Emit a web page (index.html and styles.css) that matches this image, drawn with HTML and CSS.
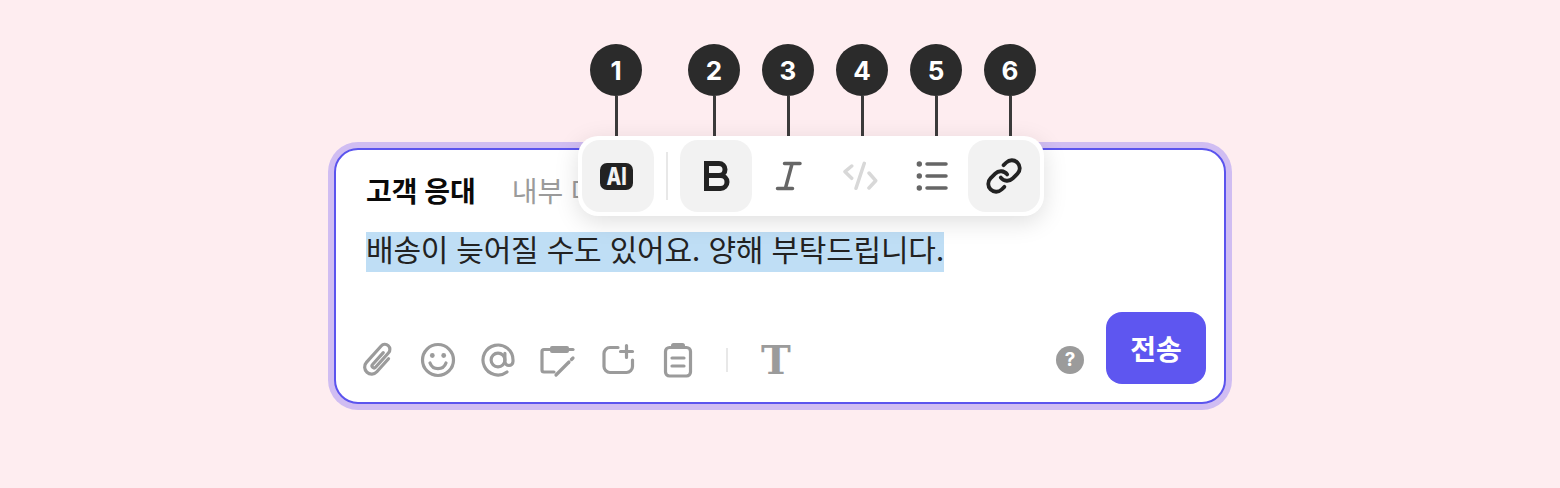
FILE: index.html
```html
<!DOCTYPE html>
<html lang="ko">
<head>
    <meta charset="UTF-8">
    <title>Composer toolbar</title>
    <link rel="stylesheet" href="styles.css">
</head>
<body>
    <div class="composer">
        <div class="tabs">
            <span class="tab active">고객 응대</span>
            <span class="tab">내부 대화</span>
        </div>
        <div class="message"><span class="selected">배송이 늦어질 수도 있어요. 양해 부탁드립니다.</span></div>
        <div class="footer">
            <div class="tools">
                <svg class="tool" viewBox="0 0 36 36"><g transform="rotate(42 18 18)"><path d="M25 10V27.500a7 7 0 0 1-14 0V5.500a5 5 0 0 1 10 0V25a2 2 0 0 1-4 0V9"/></g></svg>
                <svg class="tool" viewBox="0 0 36 36"><circle cx="18" cy="18" r="15.500"/><circle class="solid" cx="12.300" cy="13.500" r="2.400"/><circle class="solid" cx="23.700" cy="13.500" r="2.400"/><path d="M10 21a8.500 8.500 0 0 0 16 0"/></svg>
                <svg class="tool" viewBox="0 0 24 24"><g class="thin"><circle cx="12" cy="12" r="4.600"/><path d="M16.600 7.500v5.500a2.700 2.700 0 0 0 5.400 0v-1a10 10 0 1 0-4 8"/></g></svg>
                <svg class="tool" viewBox="0 0 36 36"><path d="M10 7.500H4a2 2 0 0 0-2 2V28a2 2 0 0 0 2 2h10"/><rect class="solid" x="10" y="4" width="19" height="7" rx="2"/><path d="M29 7.500h4"/><path d="M16 33l13-13"/><path d="M31.500 17.500l1.500-1.500"/></svg>
                <svg class="tool" viewBox="0 0 36 36"><path d="M18 5.500H10a6 6 0 0 0-6 6v13a6 6 0 0 0 6 6h16.500a6 6 0 0 0 6-6V18"/><path d="M26.500 3.500v12M20.500 9.500h12"/></svg>
                <svg class="tool" viewBox="0 0 36 36"><rect x="5.500" y="5.500" width="25" height="28.500" rx="4"/><rect class="solid" x="11" y="1" width="14" height="6" rx="2.500"/><path d="M12 16h12M12 24h12"/></svg>
                <span class="tool-divider"></span>
                <span class="text-tool">T</span>
            </div>
            <div class="actions">
                <span class="help">?</span>
                <button class="send">전송</button>
            </div>
        </div>

        <div class="toolbar">
            <div class="callouts">
                <div class="callout first"><span class="dot">1</span><span class="stem"></span></div>
                <div class="callout"><span class="dot">2</span><span class="stem"></span></div>
                <div class="callout"><span class="dot">3</span><span class="stem"></span></div>
                <div class="callout"><span class="dot">4</span><span class="stem"></span></div>
                <div class="callout"><span class="dot">5</span><span class="stem"></span></div>
                <div class="callout"><span class="dot">6</span><span class="stem"></span></div>
            </div>
            <div class="tb-btn on"><span class="ai-badge"><span class="ai-label">AI</span></span></div>
            <span class="tb-divider"></span>
            <div class="tb-btn on">
                <svg class="tb-icon dark bold" viewBox="0 0 36 36"><path d="M8.500 5.500H21a6 6 0 0 1 0 12H8.500M8.500 30.500V5.500M8.500 17.500H22.500a6.500 6.500 0 0 1 0 13H8.500Z"/></svg>
            </div>
            <div class="tb-btn">
                <svg class="tb-icon mid" viewBox="0 0 36 36"><path d="M14.500 5.500H30M7.500 30.500H22.500M22 6L15.500 30"/></svg>
            </div>
            <div class="tb-btn">
                <svg class="tb-icon faint" viewBox="0 0 36 36"><path d="M9.700 8L3 13.700L9.700 20.300M27 15L33.700 22.700L27 30M22.300 5.300L14 30.300"/></svg>
            </div>
            <div class="tb-btn">
                <svg class="tb-icon mid" viewBox="0 0 36 36"><circle class="solid" cx="5.300" cy="6" r="2.700"/><circle class="solid" cx="5.300" cy="18" r="2.700"/><circle class="solid" cx="5.300" cy="30" r="2.700"/><path d="M13 6H32M13 18H32M13 30H32"/></svg>
            </div>
            <div class="tb-btn on">
                <svg class="tb-icon dark link" viewBox="0 0 24 24"><path d="M10 13a5 5 0 0 0 7.540.54l3-3a5 5 0 0 0-7.070-7.070l-1.720 1.710"/><path d="M14 11a5 5 0 0 0-7.540-.54l-3 3a5 5 0 0 0 7.070 7.070l1.710-1.710"/></svg>
            </div>
        </div>
    </div>
</body>
</html>
```

FILE: styles.css
```css
* {
    box-sizing: border-box;
}
body {
    margin: 0;
    height: 488px;
    overflow: hidden;
    display: flex;
    justify-content: center;
    padding-top: 148px;
    background-color: #feedf0;
    font-family: Inter, "Noto Sans CJK KR", sans-serif;
}
.composer {
    position: relative;
    width: 892px;
    height: 256px;
    display: flex;
    flex-direction: column;
    background-color: #fff;
    border: 2px solid #5b54ee;
    border-radius: 24px;
    box-shadow: 0 0 0 6px #d0bdf2;
}
.tabs {
    display: flex;
    gap: 36px;
    padding: 24px 30px 0;
    font-size: 28px;
    line-height: 36px;
}
.tab {
    color: #9b9b9b;
}
.tab.active {
    color: #0a0a0a;
    font-weight: 700;
}
.message {
    padding: 22px 30px 0;
    font-size: 30px;
    letter-spacing: -0.22px;
    color: #222;
}
.selected {
    display: inline-block;
    line-height: 36px;
    padding-bottom: 4px;
    background-color: #bfdef5;
}
.footer {
    margin-top: auto;
    display: flex;
    justify-content: space-between;
    align-items: flex-end;
    padding: 0 18px 18px 24px;
}
.tools {
    display: flex;
    align-items: center;
    gap: 24px;
    margin-bottom: 6px;
}
.tool {
    width: 36px;
    height: 36px;
    fill: none;
    stroke: #9b9b9b;
    stroke-width: 3.2;
    stroke-linecap: round;
    stroke-linejoin: round;
}
.tool .thin {
    stroke-width: 2.1;
}
.solid {
    fill: currentColor;
    stroke: none;
}
.tool .solid {
    fill: #9b9b9b;
}
.tool-divider {
    width: 2px;
    height: 24px;
    background-color: #e8e8e8;
    margin-left: 6px;
}
.text-tool {
    width: 36px;
    margin-left: 6px;
    text-align: center;
    font-family: "DejaVu Serif", serif;
    font-weight: 700;
    font-size: 40px;
    line-height: 36px;
    color: #9b9b9b;
}
.actions {
    display: flex;
    align-items: flex-end;
    gap: 22px;
}
.help {
    width: 28px;
    height: 28px;
    margin-bottom: 10px;
    border-radius: 50%;
    background-color: #9b9b9b;
    color: #fff;
    font-size: 19px;
    font-weight: 700;
    line-height: 28px;
    text-align: center;
}
.send {
    width: 100px;
    height: 72px;
    border: none;
    border-radius: 16px;
    background-color: #5e56f0;
    color: #fff;
    font-family: inherit;
    font-size: 28px;
    font-weight: 700;
}
.toolbar {
    position: absolute;
    left: 242px;
    top: -14px;
    width: 466px;
    height: 80px;
    display: flex;
    align-items: center;
    padding: 4px;
    background-color: #fff;
    border-radius: 20px;
    box-shadow: 0 6px 24px rgba(0, 0, 0, 0.13);
}
.callouts {
    position: absolute;
    left: 12px;
    top: -92px;
    display: flex;
    gap: 22px;
}
.callout {
    display: flex;
    flex-direction: column;
    align-items: center;
}
.callout.first {
    margin-right: 24px;
}
.dot {
    width: 52px;
    height: 52px;
    border-radius: 50%;
    background-color: #2b2b2b;
    color: #fff;
    font-size: 26px;
    font-weight: 700;
    line-height: 54px;
    text-align: center;
}
.stem {
    width: 3px;
    height: 40px;
    background-color: #3a3a3a;
}
.tb-btn {
    width: 72px;
    height: 72px;
    display: flex;
    align-items: center;
    justify-content: center;
    border-radius: 18px;
}
.tb-btn.on {
    background-color: #f2f2f2;
}
.tb-divider {
    width: 2px;
    height: 48px;
    margin: 0 12px;
    background-color: #e8e8e8;
}
.ai-badge {
    width: 33px;
    height: 27px;
    margin-left: -3px;
    display: flex;
    justify-content: center;
    border-radius: 7px;
    background-color: #222;
}
.ai-label {
    color: #f2f2f2;
    font-size: 24px;
    font-weight: 800;
    line-height: 27px;
    transform: scaleX(0.8);
}
.tb-icon {
    width: 36px;
    height: 36px;
    fill: none;
    stroke-width: 3.5;
    stroke-linecap: round;
    stroke-linejoin: round;
}
.tb-icon.dark {
    stroke: #222;
    color: #222;
}
.tb-icon.bold {
    stroke-width: 5;
    stroke-linecap: square;
    stroke-linejoin: miter;
}
.tb-icon.mid {
    stroke: #666;
    color: #666;
}
.tb-icon.faint {
    stroke: #d8d8d8;
}
.tb-icon.link {
    width: 38px;
    height: 38px;
    stroke-width: 2.4;
}
```
